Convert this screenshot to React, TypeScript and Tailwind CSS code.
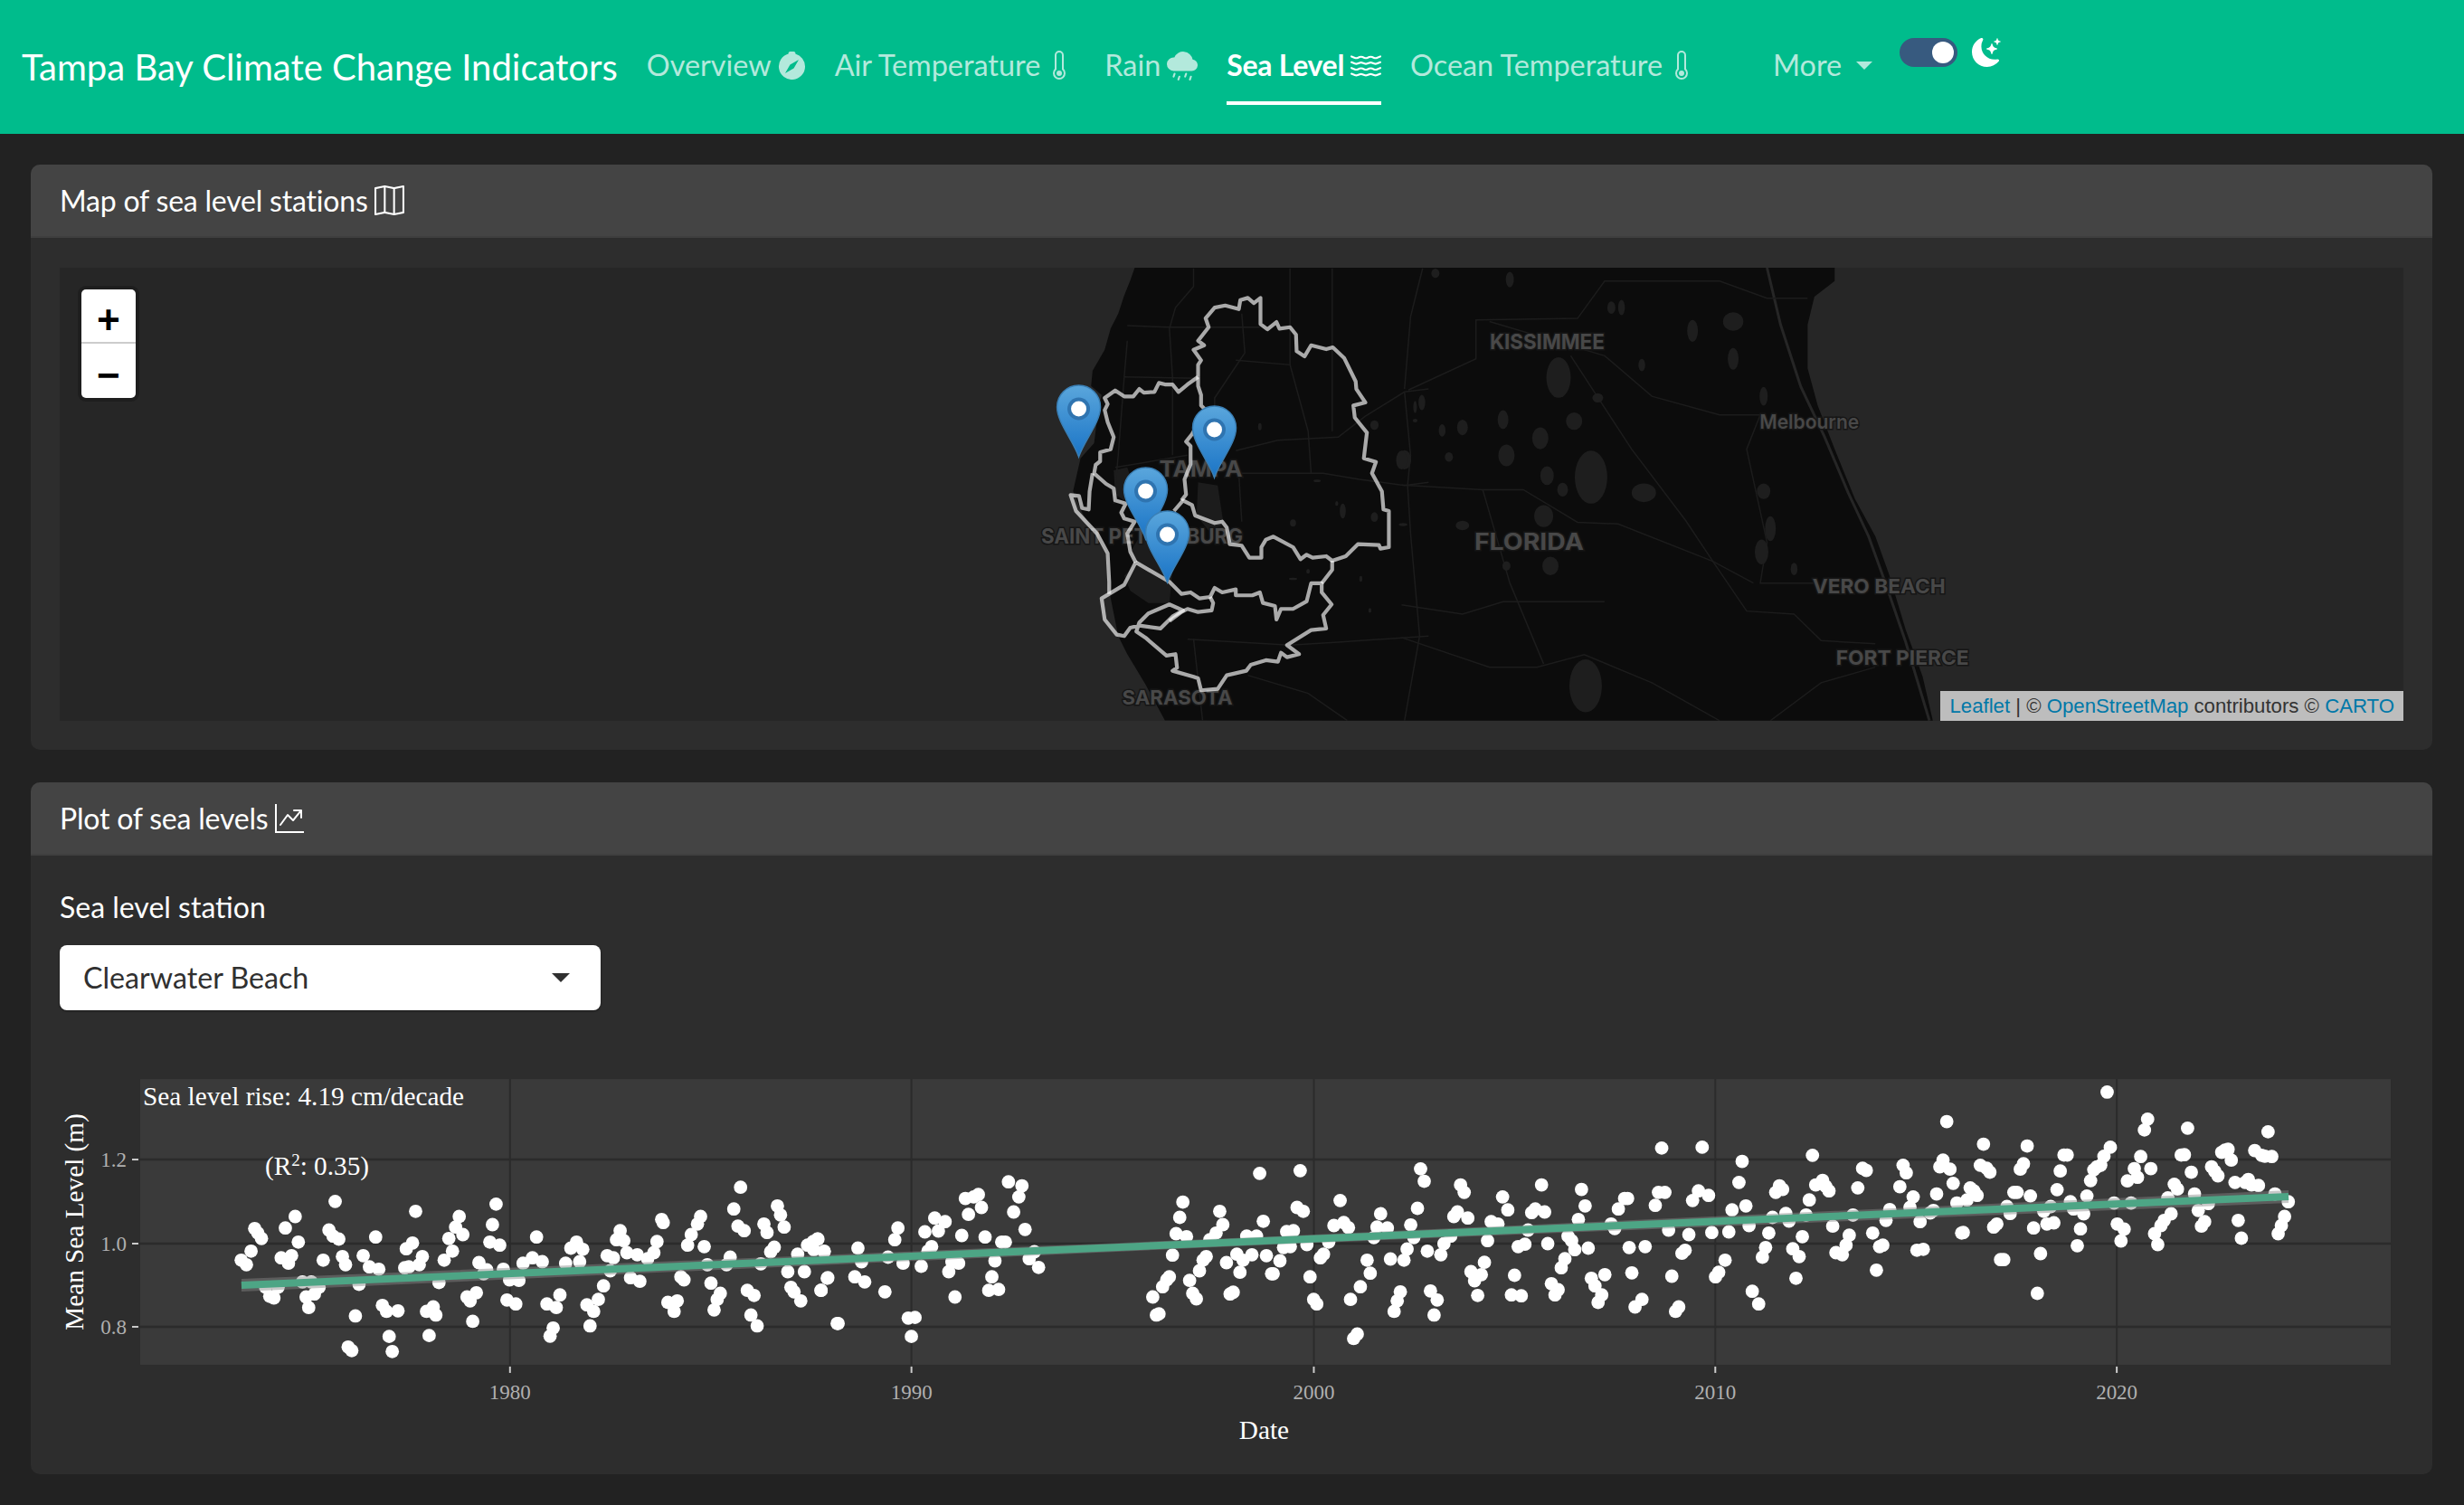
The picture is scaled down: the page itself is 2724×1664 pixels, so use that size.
import { ReactNode } from "react";
import {
    BsCloudDrizzleFill,
    BsCompassFill,
    BsGraphUpArrow,
    BsMap,
    BsMoonStarsFill,
    BsThermometer,
    BsWater,
} from "react-icons/bs";

type Pt = number[];

// traced from the zoomed crops, converted to page pixels by these helpers
const fromMapWest = (p: Pt): Pt => [1080 + p[0] / 3, 290 + p[1] / 3];
const fromMapEast = (p: Pt): Pt => [1550 + p[0] / 1.336, 290 + p[1] / 2.904];
const toD = (pts: Pt[]) => "M" + pts.map((p) => `${p[0].toFixed(1)},${p[1].toFixed(1)}`).join("L");

const navLinks = [
    { label: "Overview", icon: <BsCompassFill className="w-[31px] h-[31px]" /> },
    { label: "Air Temperature", icon: <BsThermometer className="w-[32px] h-[32px] -ml-[2px] mr-[2px]" /> },
    { label: "Rain", icon: <BsCloudDrizzleFill className="w-[34px] h-[34px]" /> },
    { label: "Sea Level", icon: <BsWater className="w-[34px] h-[34px]" />, active: true },
    { label: "Ocean Temperature", icon: <BsThermometer className="w-[32px] h-[32px] -ml-[2px] mr-[2px]" /> },
];

const westCoast: Pt[] = [
    [525, 17], [510, 60], [490, 110], [470, 170], [445, 220], [425, 290], [385, 360], [380, 410], [415, 440],
    [400, 520], [390, 600], [345, 650], [320, 760], [350, 830], [430, 960], [440, 1090], [470, 1240], [500, 1300],
    [560, 1400], [625, 1520],
];
const eastCoast: Pt[] = [
    [785, 1472], [770, 1330], [745, 1180], [720, 1000], [700, 880], [670, 760], [640, 600], [615, 460], [600, 340],
    [600, 200], [610, 110], [640, 60], [640, 17],
];
const lagoon: Pt[] = [
    [540, 17], [560, 200], [590, 400], [625, 560], [660, 740], [690, 880], [715, 1030], [745, 1220], [780, 1472],
];
const bays: Pt[][] = [
    [[455, 690], [500, 680], [520, 740], [490, 790], [460, 770]],
    [[530, 1000], [510, 960], [560, 880], [640, 820], [690, 880], [700, 930], [650, 1020], [640, 1130], [570, 1130], [510, 1090], [490, 1040]],
    [[735, 730], [800, 740], [820, 870], [770, 890], [730, 840]],
];

const roadsWest: Pt[][] = [
    [[720, 20], [720, 80], [660, 150], [640, 220], [650, 380], [650, 640]],
    [[500, 210], [640, 215], [760, 215], [940, 215]],
    [[500, 260], [490, 380], [470, 640], [455, 800]],
    [[880, 170], [890, 300], [790, 450], [790, 500]],
    [[490, 380], [730, 385]],
    [[860, 325], [1040, 340], [1100, 560], [1110, 700]],
    [[860, 625], [1000, 590], [1200, 580], [1290, 510], [1420, 430], [1500, 420]],
    [[860, 700], [1150, 700], [1270, 720], [1420, 740], [1500, 730]],
    [[870, 700], [880, 860]],
    [[1420, 430], [1440, 640], [1430, 740], [1440, 900], [1470, 1240], [1420, 1520]],
    [[1480, 20], [1440, 180], [1420, 420]],
    [[1180, 20], [1180, 560]],
    [[1040, 20], [1040, 340]],
    [[700, 1250], [1040, 1270], [1200, 1260], [1500, 1240]],
    [[900, 1370], [1100, 1430], [1230, 1520]],
    [[720, 1250], [750, 1520]],
    [[460, 680], [700, 640]],
];
const roadsEast: Pt[][] = [
    [[10, 410], [110, 310], [110, 185], [260, 180], [300, 60], [470, 60], [540, 115], [600, 115]],
    [[130, 190], [300, 300], [370, 430], [470, 490], [530, 490], [510, 600], [540, 900], [530, 1030], [610, 1030]],
    [[0, 715], [120, 730], [180, 730], [260, 835], [320, 840], [460, 960], [520, 1030]],
    [[250, 300], [340, 600], [420, 830], [460, 960], [510, 1120], [580, 1130], [620, 1215], [700, 1225]],
    [[0, 1205], [130, 1300], [200, 1300], [270, 1260], [370, 1350], [470, 1472]],
    [[545, 1472], [620, 1350], [700, 1300]],
    [[0, 1100], [90, 1130], [150, 1090], [300, 1090]],
    [[120, 730], [160, 1030], [210, 1290]],
];

const lakesWest: number[][] = [
    [1420, 655, 22, 32], [1320, 540, 14, 16], [940, 545, 6, 12], [1455, 480, 6, 20], [1455, 525, 8, 6], [1050, 865, 10, 12],
    [1215, 825, 10, 25], [1195, 800, 5, 8], [1130, 725, 12, 4], [1275, 1050, 5, 10], [1415, 870, 14, 5], [1320, 845, 12, 16],
    [1305, 1155, 5, 8], [1050, 1050, 14, 4], [1100, 1025, 6, 8],
];
const lakesEast: number[][] = [
    [232, 370, 18, 65], [255, 510, 12, 28], [205, 565, 12, 35], [155, 620, 12, 35], [150, 505, 8, 30], [215, 685, 10, 30],
    [280, 690, 24, 85], [358, 740, 18, 30], [238, 730, 8, 22], [210, 815, 14, 35], [272, 1360, 24, 85], [90, 845, 10, 15],
    [155, 975, 6, 15], [220, 975, 12, 30], [532, 930, 10, 40], [535, 735, 10, 25], [545, 855, 8, 40], [430, 220, 8, 35],
    [490, 190, 15, 30], [490, 310, 8, 35], [535, 430, 6, 30], [290, 435, 8, 15], [310, 145, 6, 20], [160, 55, 6, 25],
    [50, 35, 6, 15], [30, 450, 5, 25], [60, 540, 5, 20], [90, 530, 8, 25], [70, 625, 6, 15], [0, 635, 8, 30], [325, 145, 5, 25],
    [355, 330, 5, 20], [580, 985, 5, 20],
];

const watershed: Pt[][] = [
    [
        [735, 380], [735, 340], [745, 325], [720, 290], [755, 275], [735, 260], [770, 215], [760, 185], [790, 150], [825, 143],
        [870, 155], [875, 125], [900, 118], [920, 135], [942, 118], [942, 205], [965, 222], [995, 198], [1005, 220], [1040, 215],
        [1060, 240], [1062, 295], [1088, 312], [1110, 275], [1160, 288], [1182, 282], [1220, 318], [1258, 395], [1260, 420],
        [1290, 465], [1250, 475], [1255, 515], [1295, 565], [1285, 650], [1325, 662], [1312, 700], [1345, 760], [1350, 820],
        [1368, 825], [1368, 945], [1340, 950], [1335, 938], [1265, 935], [1225, 975], [1180, 990], [1160, 975], [1115, 980],
        [1095, 970], [1075, 985], [1050, 945], [985, 910], [960, 920], [945, 945], [945, 980], [905, 980], [880, 940], [840, 935],
        [830, 880], [815, 860], [790, 865], [725, 840], [715, 805], [685, 790], [655, 825],
    ],
    [
        [735, 380], [735, 410], [745, 440], [745, 475], [760, 490], [715, 570], [695, 595], [710, 610], [710, 670], [690, 720],
        [695, 770], [680, 790],
    ],
    [
        [735, 380], [700, 405], [670, 430], [650, 405], [625, 405], [605, 400], [590, 430], [555, 432], [540, 420], [520, 445],
        [490, 445], [460, 425], [425, 450], [435, 470], [425, 490], [435, 530], [455, 580], [445, 620], [410, 630], [410, 660],
        [395, 672], [390, 700], [430, 735], [455, 750], [460, 790], [495, 800], [480, 830], [490, 850], [525, 860], [500, 900],
        [510, 960], [528, 995],
    ],
    [
        [385, 700], [375, 760], [372, 820], [350, 815], [340, 775], [312, 772], [330, 825], [400, 900], [435, 965], [440, 1060],
        [440, 1100],
    ],
    [
        [528, 995], [490, 1070], [440, 1100], [415, 1115], [425, 1185], [465, 1235], [490, 1240], [510, 1212], [540, 1205],
        [610, 1215], [650, 1175], [685, 1155], [640, 1135], [570, 1165], [540, 1195], [530, 1225], [560, 1245], [630, 1305],
        [660, 1300], [665, 1345], [650, 1355], [720, 1375], [735, 1380], [745, 1420], [800, 1415], [830, 1370], [895, 1355],
        [910, 1335], [960, 1320], [1000, 1325], [1010, 1295], [1030, 1310], [1070, 1300], [1030, 1270], [1110, 1220], [1160, 1215],
        [1150, 1170], [1178, 1135], [1145, 1095], [1145, 1065], [1110, 1065], [1095, 1125], [1050, 1150], [1010, 1150], [995, 1185],
        [990, 1140], [950, 1130], [940, 1095], [915, 1105], [860, 1105], [860, 1085], [815, 1095], [790, 1080], [775, 1110],
        [740, 1115], [710, 1095], [680, 1100], [640, 1060], [528, 995],
    ],
    [[775, 1110], [785, 1130], [780, 1155], [735, 1160], [700, 1150], [680, 1160], [640, 1190]],
    [[1145, 1065], [1180, 1020], [1180, 990]],
];

const cityLabels = [
    { name: "KISSIMMEE", x: 1711, y: 378, w: 127, size: 23 },
    { name: "Melbourne", x: 2001, y: 466, w: 110, size: 22 },
    { name: "TAMPA", x: 1328, y: 518, w: 92, size: 24 },
    { name: "SAINT PETERSBURG", x: 1263, y: 593, w: 223, size: 23 },
    { name: "FLORIDA", x: 1691, y: 599, w: 121, size: 25 },
    { name: "VERO BEACH", x: 2078, y: 648, w: 147, size: 22 },
    { name: "FORT PIERCE", x: 2104, y: 727, w: 147, size: 22 },
    { name: "SARASOTA", x: 1302, y: 771, w: 122, size: 22 },
];

const pins: Pt[] = [[1193, 505], [1343, 528], [1267, 596], [1291, 644]];

const dots1: Pt[] = [
    [395, 640], [405, 655], [414, 610], [421, 535], [427, 550], [434, 568], [472, 632], [486, 650], [492, 625], [480, 533], [499, 495],
    [505, 580], [513, 712], [530, 712], [442, 730], [466, 730], [450, 760], [458, 765], [520, 762], [536, 752], [545, 730], [525, 797],
    [553, 640], [564, 540], [572, 560], [583, 570], [576, 445], [590, 628], [596, 655], [622, 720], [615, 825], [630, 625], [642, 662],
    [660, 670], [654, 563], [601, 928], [608, 940], [667, 790], [675, 810], [697, 808], [680, 893], [686, 943], [710, 665], [718, 662],
    [713, 602], [725, 583], [731, 478], [738, 655], [744, 628], [776, 714], [752, 810], [765, 795], [770, 822], [757, 890], [786, 640],
    [795, 568], [802, 610], [808, 530], [815, 495], [822, 555], [830, 762], [836, 775], [848, 748], [841, 843], [853, 648], [862, 685],
    [868, 672], [879, 522], [886, 454], [874, 580], [893, 590], [900, 670], [912, 705], [930, 707], [907, 772], [924, 785], [938, 650],
    [956, 632], [975, 645], [964, 563], [984, 785], [1002, 797], [1009, 755], [996, 865], [990, 892], [1020, 650], [1030, 600], [1041, 580],
    [1053, 604], [1047, 645], [1061, 788], [1074, 810], [1083, 770], [1093, 725], [1067, 858], [1100, 625], [1112, 632], [1106, 675],
    [1118, 572], [1125, 542], [1132, 575], [1138, 615], [1158, 622], [1178, 635], [1190, 615], [1196, 578], [1145, 698], [1163, 710],
    [1205, 505], [1208, 515], [1242, 695], [1248, 705], [1255, 590], [1262, 555], [1274, 520], [1280, 495], [1287, 595], [1293, 655],
    [1300, 716], [1318, 750], [1312, 770], [1306, 805], [1217, 780], [1235, 775], [1229, 810], [1330, 655], [1337, 630], [1344, 470],
    [1352, 527], [1364, 542], [1357, 398], [1370, 740], [1383, 757], [1377, 822], [1389, 858], [1396, 652], [1402, 520], [1408, 548],
    [1415, 612], [1422, 597], [1428, 460], [1434, 490], [1441, 530], [1448, 678], [1454, 730], [1460, 745], [1473, 775], [1467, 620],
    [1480, 678], [1486, 590], [1497, 578], [1505, 570], [1518, 612], [1524, 700], [1512, 740], [1545, 850],
];
const dots2: Pt[] = [
    [8, 570], [20, 610], [0, 605], [27, 698], [14, 740], [45, 850], [85, 600], [92, 645], [79, 695], [98, 712], [137, 745], [143, 630],
    [156, 572], [162, 533], [172, 650], [182, 832], [195, 830], [188, 893], [207, 660], [214, 546], [220, 610], [227, 595], [233, 500],
    [240, 543], [253, 512], [260, 678], [266, 645], [279, 650], [272, 762], [285, 558], [292, 435], [298, 488], [308, 430], [317, 422],
    [323, 465], [330, 563], [337, 740], [343, 695], [349, 642], [356, 737], [362, 580], [369, 580], [375, 380], [385, 480], [395, 430],
    [401, 393], [407, 538], [415, 635], [425, 612], [433, 664], [653, 762], [660, 822], [665, 818], [672, 728], [680, 705], [685, 695],
    [691, 623], [698, 552], [705, 498], [711, 447], [718, 562], [724, 707], [730, 750], [737, 768], [743, 675], [750, 640], [756, 628],
    [763, 572], [775, 550], [782, 478], [788, 522], [795, 648], [802, 752], [808, 746], [815, 620], [821, 680], [827, 640], [834, 560],
    [844, 622], [853, 560], [859, 352], [866, 511], [872, 625], [882, 685], [885, 685], [898, 642], [905, 598], [911, 545], [918, 595],
    [924, 542], [931, 465], [937, 343], [943, 478], [950, 588], [956, 695], [963, 770], [969, 785], [976, 632], [982, 620], [992, 580],
    [1002, 525], [1014, 442], [1021, 515], [1030, 532], [1034, 770], [1040, 900], [1047, 885], [1053, 728], [1066, 640], [1072, 683],
    [1079, 565], [1085, 530], [1092, 486], [1105, 533], [1111, 636], [1118, 810], [1124, 775], [1130, 745], [1137, 640], [1143, 603],
    [1150, 523], [1156, 565], [1163, 468], [1169, 337], [1176, 378], [1182, 610], [1188, 742], [1195, 822], [1201, 772], [1208, 622],
    [1214, 585], [1227, 560], [1233, 495], [1240, 480], [1246, 390], [1253, 415], [1260, 500], [1266, 678], [1273, 708], [1279, 757],
    [1286, 688], [1292, 647], [1298, 575], [1305, 512], [1318, 520], [1327, 430], [1337, 473], [1344, 755], [1350, 690], [1357, 595],
    [1363, 758], [1370, 587], [1376, 540], [1383, 482], [1390, 470], [1402, 390], [1408, 480], [1414, 585], [1421, 718], [1428, 755],
    [1434, 738], [1440, 665], [1447, 635], [1453, 560], [1460, 575], [1466, 605], [1473, 505], [1479, 405], [1486, 460], [1492, 600],
    [1498, 700], [1505, 725], [1511, 780], [1518, 755], [1524, 688], [1536, 520], [1543, 535], [1550, 470], [1562, 435],
];
const dots3: Pt[] = [
    [0, 435], [52, 458], [58, 415], [70, 415], [77, 540], [64, 268], [33, 595], [3, 598], [8, 682], [83, 693], [14, 795], [27, 770], [90, 810],
    [96, 795], [102, 617], [108, 607], [115, 555], [122, 442], [133, 410], [140, 265], [152, 425], [158, 548], [165, 695], [171, 680], [183, 640],
    [190, 546], [196, 473], [209, 382], [215, 312], [222, 460], [228, 525], [234, 743], [246, 785], [253, 630], [259, 598], [265, 550], [272, 498],
    [278, 415], [285, 393], [291, 405], [297, 485], [303, 510], [310, 602], [316, 700], [322, 628], [328, 562], [335, 490], [341, 440], [347, 292],
    [353, 390], [366, 375], [372, 395], [378, 410], [385, 527], [391, 615], [403, 622], [410, 590], [416, 557], [423, 490], [432, 400], [441, 335],
    [448, 342], [460, 550], [467, 673], [473, 595], [479, 590], [485, 508], [492, 472], [511, 396], [517, 325], [523, 350], [530, 465], [536, 430],
    [543, 607], [555, 604], [549, 512], [568, 483], [574, 475], [580, 420], [586, 330], [592, 308], [599, 180], [605, 338], [611, 385], [618, 450],
    [627, 550], [630, 548], [637, 440], [643, 400], [650, 410], [656, 425], [662, 325], [668, 255], [674, 335], [680, 348], [687, 530], [693, 520],
    [700, 638], [706, 638], [712, 462], [718, 485], [725, 415], [731, 415], [737, 338], [743, 320], [750, 261], [756, 427], [762, 533], [769, 750],
    [775, 618], [781, 478], [787, 520], [794, 462], [800, 516], [806, 406], [812, 344], [819, 291], [825, 291], [831, 446], [837, 470], [844, 592],
    [850, 536], [856, 486], [862, 427], [869, 376], [875, 340], [881, 330], [888, 325], [894, 295], [900, 82], [906, 265], [913, 450], [919, 520],
    [926, 576], [932, 537], [938, 377], [945, 450], [951, 336], [957, 365], [963, 296], [970, 208], [976, 172], [982, 336], [989, 552], [995, 588],
    [1001, 525], [1007, 508], [1014, 433], [1020, 486], [1026, 388], [1032, 404], [1039, 291], [1045, 290], [1051, 202], [1058, 348], [1064, 420],
    [1071, 475], [1077, 527], [1083, 512], [1090, 452], [1096, 330], [1102, 345], [1108, 360], [1115, 282], [1121, 275], [1127, 272], [1133, 308],
    [1140, 382], [1146, 508], [1152, 567], [1159, 382], [1165, 372], [1171, 390], [1177, 276], [1184, 392], [1190, 292], [1196, 295], [1202, 214],
    [1209, 296], [1215, 420], [1221, 552], [1227, 525], [1233, 495], [1240, 446],
];

const allDots: Pt[] = [
    ...dots1.map((p) => [40 + p[0] / 1.742, 1180 + p[1] / 3]),
    ...dots2.map((p) => [900 + p[0] / 1.742, 1180 + p[1] / 3]),
    ...dots3.map((p) => [1800 + p[0] / 1.697, 1180 + p[1] / 3]),
];

const yTicks = [
    { label: "1.2", y: 1282 },
    { label: "1.0", y: 1375 },
    { label: "0.8", y: 1467 },
];
const xTicks = [
    { label: "1980", x: 564 },
    { label: "1990", x: 1008 },
    { label: "2000", x: 1453 },
    { label: "2010", x: 1897 },
    { label: "2020", x: 2341 },
];

function Card({ title, icon, children }: { title: string; icon: ReactNode; children: ReactNode }) {
    return (
        <div className="bg-[#2d2d2d] rounded-[10px] overflow-hidden">
            <div className="h-[81px] bg-[#444444] border-b-2 border-[#3f3f3f] px-[32px] flex items-center gap-[7px] text-white text-[32px] tracking-[-0.2px]">
                <span>{title}</span>
                {icon}
            </div>
            {children}
        </div>
    );
}

function SeaLevelMap() {
    return (
        <div className="relative h-[501px] bg-[#262626] overflow-hidden">
            <svg className="block w-full h-full" viewBox="66 296 2592 501">
                <defs>
                    <linearGradient id="pinFill" x1="0" y1="0" x2="0" y2="1">
                        <stop offset="0" stopColor="#5aa6dc" />
                        <stop offset="1" stopColor="#1a74c6" />
                    </linearGradient>
                </defs>
                <path
                    d={toD([...westCoast.map(fromMapWest), ...eastCoast.map(fromMapEast)]) + "Z"}
                    fill="#0c0c0c"
                />
                <path d={toD(lagoon.map(fromMapEast))} fill="none" stroke="#262626" strokeWidth="3" />
                {bays.map((b, i) => (
                    <path key={i} d={toD(b.map(fromMapWest)) + "Z"} fill="#1c1c1c" />
                ))}
                <g fill="none" stroke="#1c1c1c" strokeWidth="1.5">
                    {roadsWest.map((r, i) => (
                        <path key={i} d={toD(r.map(fromMapWest))} />
                    ))}
                    {roadsEast.map((r, i) => (
                        <path key={i} d={toD(r.map(fromMapEast))} />
                    ))}
                </g>
                <g fill="#1e1e1e">
                    {lakesWest.map((l, i) => (
                        <ellipse key={i} cx={1080 + l[0] / 3} cy={290 + l[1] / 3} rx={l[2] / 3} ry={l[3] / 3} />
                    ))}
                    {lakesEast.map((l, i) => (
                        <ellipse key={i} cx={1550 + l[0] / 1.336} cy={290 + l[1] / 2.904} rx={l[2] / 1.336} ry={l[3] / 2.904} />
                    ))}
                </g>
                {cityLabels.map((c) => (
                    <text
                        key={c.name}
                        x={c.x}
                        y={c.y + c.size * 0.36}
                        textAnchor="middle"
                        textLength={c.w}
                        lengthAdjust="spacingAndGlyphs"
                        fontFamily="Inter, sans-serif"
                        fontWeight={c.name === "Melbourne" ? 600 : 700}
                        fontSize={c.size}
                        fill="#484848"
                        stroke="#161616"
                        strokeWidth="3"
                        paintOrder="stroke"
                    >
                        {c.name}
                    </text>
                ))}
                <g fill="none" stroke="#ffffff" strokeOpacity="0.65" strokeWidth="4.2" strokeLinejoin="round">
                    {watershed.map((w, i) => (
                        <path key={i} d={toD(w.map(fromMapWest))} />
                    ))}
                </g>
                {pins.map((p, i) => (
                    <g key={i} transform={`translate(${p[0]},${p[1]})`}>
                        <path
                            d="M0,0C-6,-18 -24,-38 -24,-55A24,24 0 1 1 24,-55C24,-38 6,-18 0,0Z"
                            fill="url(#pinFill)"
                            stroke="#3a7fb5"
                            strokeWidth="1.5"
                        />
                        <circle cx="0" cy="-53" r="12.5" fill="#2f74b0" />
                        <circle cx="0" cy="-53" r="8.5" fill="#ffffff" />
                    </g>
                ))}
            </svg>

            <div className="absolute left-[24px] top-[24px] w-[60px] rounded-[5px] bg-white shadow-[0_0_0_4px_#1e1e1e] font-['Liberation_Mono',monospace] font-bold text-black text-[44px] text-center">
                <div className="h-[60px] leading-[75px] border-b-2 border-[#cccccc]">+</div>
                <div className="h-[60px] leading-[76px]">−</div>
            </div>

            <div className="absolute right-0 bottom-0 h-[33px] px-[10px] bg-[#bdbdbd] font-['Liberation_Sans',sans-serif] text-[#333333] text-[22.2px] leading-[33px] whitespace-nowrap">
                <span className="text-[#0078a8]">Leaflet</span> | © <span className="text-[#0078a8]">OpenStreetMap</span> contributors ©{" "}
                <span className="text-[#0078a8]">CARTO</span>
            </div>
        </div>
    );
}

function SeaLevelPlot() {
    return (
        <svg className="block w-full h-[440px] mt-[53px]" viewBox="66 1170 2592 440" fontFamily="'Liberation Serif', serif">
            <rect x="155" y="1193" width="2489" height="316" fill="#3a3a3a" />
            <g stroke="#2b2b2b" strokeWidth="2.5">
                {yTicks.map((t) => (
                    <line key={t.label} x1="155" x2="2644" y1={t.y} y2={t.y} />
                ))}
                {xTicks.map((t) => (
                    <line key={t.label} x1={t.x} x2={t.x} y1="1193" y2="1509" strokeWidth="2" />
                ))}
            </g>
            <g fill="#ffffff">
                {allDots.map((d, i) => (
                    <circle key={i} cx={d[0]} cy={d[1]} r="7.4" />
                ))}
            </g>
            <path
                d="M267,1414L1399,1367.5L2531,1316L2531,1330L1399,1376.5L267,1428Z"
                fill="#888888"
                fillOpacity="0.45"
            />
            <line x1="267" y1="1421" x2="2531" y2="1323" stroke="#4da585" strokeWidth="8" />

            {yTicks.map((t) => (
                <g key={t.label}>
                    <line x1="146" x2="153" y1={t.y} y2={t.y} stroke="#cccccc" strokeWidth="2" />
                    <text x="140" y={t.y + 8} textAnchor="end" fontSize="23" fill="#b0b0b0">
                        {t.label}
                    </text>
                </g>
            ))}
            {xTicks.map((t) => (
                <g key={t.label}>
                    <line x1={t.x} x2={t.x} y1="1511" y2="1518" stroke="#cccccc" strokeWidth="2" />
                    <text x={t.x} y="1547" textAnchor="middle" fontSize="23" fill="#b0b0b0">
                        {t.label}
                    </text>
                </g>
            ))}

            <text x="158" y="1222" fontSize="29.3" fill="#ffffff">
                Sea level rise: 4.19 cm/decade
            </text>
            <text x="293" y="1299" fontSize="29.3" fill="#ffffff">
                (R<tspan dy="-10" fontSize="19">2</tspan>
                <tspan dy="10">: 0.35)</tspan>
            </text>
            <text x="1398" y="1591" textAnchor="middle" fontSize="29.3" fill="#ffffff">
                Date
            </text>
            <text transform="translate(92,1351) rotate(-90)" textAnchor="middle" fontSize="29.3" fill="#ffffff">
                Mean Sea Level (m)
            </text>
        </svg>
    );
}

export default function App() {
    return (
        <div className="min-h-screen bg-[#222222] font-[Lato]">
            <nav className="h-[148px] bg-[#00bc8c] flex items-center pl-[24px]">
                <span className="text-white text-[40px] mr-[16px] whitespace-nowrap">Tampa Bay Climate Change Indicators</span>
                {navLinks.map((link) => (
                    <a
                        key={link.label}
                        className={
                            link.active
                                ? "mx-[16px] h-[84px] flex items-center gap-[7px] border-b-4 border-white text-white font-bold text-[32px] tracking-[-0.3px] whitespace-nowrap"
                                : "mx-[16px] h-[84px] flex items-center gap-[7px] border-b-4 border-transparent text-[#b3e9dc] text-[32.4px] whitespace-nowrap"
                        }
                    >
                        {link.label}
                        {link.icon}
                    </a>
                ))}
                <a className="ml-[67px] h-[84px] flex items-center gap-[16px] border-b-4 border-transparent text-[#b3e9dc] text-[32.4px] whitespace-nowrap">
                    More
                    <span className="w-0 h-0 border-x-[9px] border-x-transparent border-t-[9px] border-t-[#b3e9dc]" />
                </a>
                <div className="ml-[30px] mb-[32px] flex items-center gap-[16px]">
                    <div className="w-[64px] h-[32px] rounded-full bg-[#375a7f] flex items-center justify-end pr-[4px]">
                        <div className="w-[24px] h-[24px] rounded-full bg-white" />
                    </div>
                    <BsMoonStarsFill className="w-[32px] h-[32px] text-white" />
                </div>
            </nav>

            <main className="pt-[34px] pl-[34px] pr-[35px] flex flex-col gap-[36px]">
                <Card title="Map of sea level stations" icon={<BsMap className="w-[33px] h-[33px]" />}>
                    <div className="pt-[33px] pb-[32px] px-[32px]">
                        <SeaLevelMap />
                    </div>
                </Card>

                <Card title="Plot of sea levels" icon={<BsGraphUpArrow className="w-[32px] h-[32px]" />}>
                    <div className="pt-[38px] pb-[20px] px-[32px]">
                        <label className="block text-white text-[32px] leading-[38px] mb-[23px]">Sea level station</label>
                        <div className="w-[598px] h-[72px] rounded-[8px] bg-white shadow-[0_1px_2px_rgba(0,0,0,0.5)] flex items-center justify-between pl-[26px] pr-[34px] text-[#303030] text-[32.2px]">
                            <span>Clearwater Beach</span>
                            <span className="w-0 h-0 border-x-[10px] border-x-transparent border-t-[10px] border-t-[#303030]" />
                        </div>
                        <SeaLevelPlot />
                    </div>
                </Card>
            </main>
        </div>
    );
}
